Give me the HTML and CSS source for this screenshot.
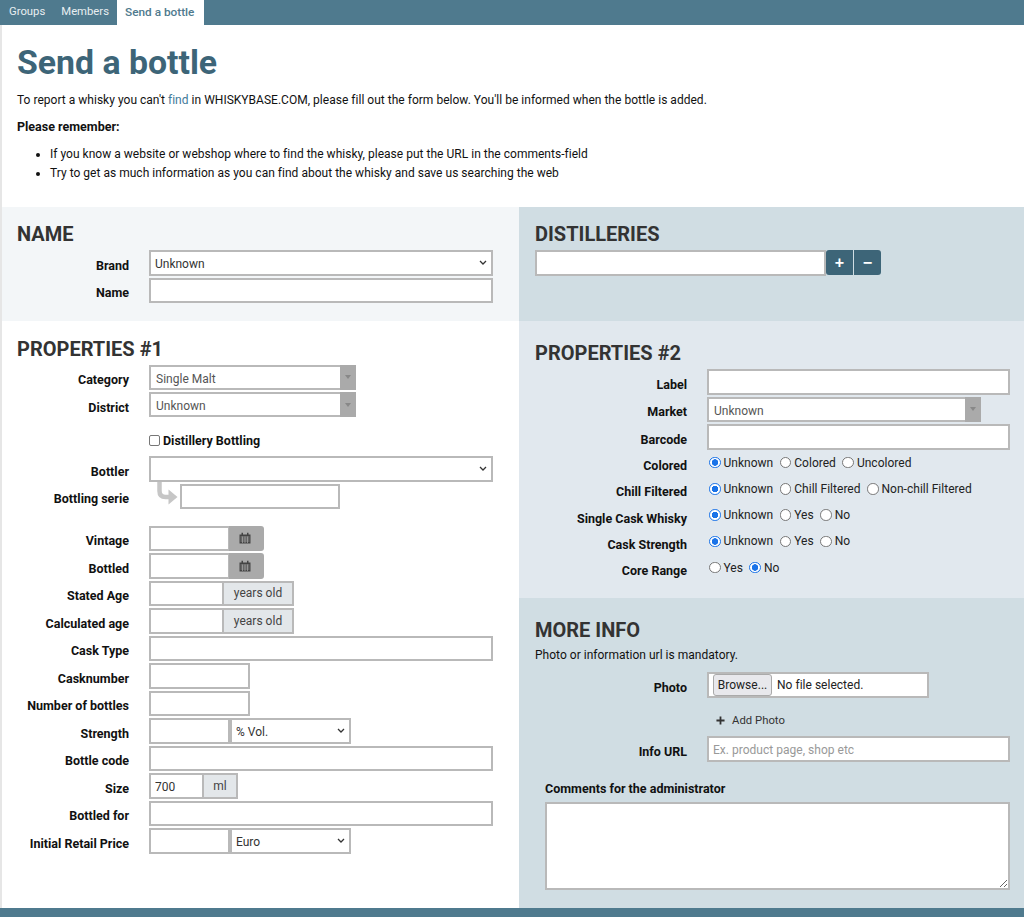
FILE: index.html
```html
<!DOCTYPE html>
<html lang="en">
<head>
    <meta charset="UTF-8">
    <title>Send a bottle</title>
    <link rel="stylesheet" href="styles.css">
</head>
<body>
    <nav class="tabs">
        <a class="tab">Groups</a>
        <a class="tab">Members</a>
        <a class="tab active">Send a bottle</a>
    </nav>
    <div class="page">
        <div class="intro">
            <h1>Send a bottle</h1>
            <p>To report a whisky you can't <a class="link">find</a> in WHISKYBASE.COM, please fill out the form below. You'll be informed when the bottle is added.</p>
            <p class="remember">Please remember:</p>
            <ul>
                <li>If you know a website or webshop where to find the whisky, please put the URL in the comments-field</li>
                <li>Try to get as much information as you can find about the whisky and save us searching the web</li>
            </ul>
        </div>
        <form class="columns">
            <div class="col">
                <section class="block block-name">
                    <h2>NAME</h2>
                    <div class="row"><label>Brand</label><div class="select w-full"><select><option>Unknown</option></select><svg class="chev" viewBox="0 0 8 5"><path d="M1 1l3 3 3-3" fill="none" stroke="#333" stroke-width="1.3"/></svg></div></div>
                    <div class="row"><label>Name</label><input class="w-full" type="text"></div>
                </section>
                <section class="block block-props1">
                    <h2>PROPERTIES #1</h2>
                    <div class="row"><label>Category</label><div class="combo w-207"><span>Single Malt</span><i class="combo-arrow"></i></div></div>
                    <div class="row"><label>District</label><div class="combo w-207"><span>Unknown</span><i class="combo-arrow"></i></div></div>
                    <div class="row-check"><input type="checkbox" id="dist-bottling"><label for="dist-bottling">Distillery Bottling</label></div>
                    <div class="row"><label>Bottler</label><div class="select w-full"><select><option></option></select><svg class="chev" viewBox="0 0 8 5"><path d="M1 1l3 3 3-3" fill="none" stroke="#333" stroke-width="1.3"/></svg></div></div>
                    <div class="row row-serie">
                        <label>Bottling serie</label>
                        <svg class="turn" viewBox="0 0 22 24"><path d="M2.500 0v9q0 6 6 6h4" fill="none" stroke="#c6c6c6" stroke-width="4.500"/><path d="M11.500 7.500l9 7.500-9 7.500z" fill="#c6c6c6"/></svg>
                        <input class="w-160" type="text">
                    </div>
                    <div class="row"><label>Vintage</label><div class="group"><input class="w-81" type="text"><span class="cal-btn"><svg class="cal" viewBox="0 0 12 12"><path d="M0.500 2.500h11v9h-11z M2.500 0.800h1.500v2.500h-1.500z M8 0.800h1.500v2.500h-1.500z" fill="#444"/><path d="M1.500 5h9M1.500 7h9M1.500 9h9M3.500 4.500v6.500M6 4.500v6.500M8.500 4.500v6.500" stroke="#aaa" stroke-width="0.700"/></svg></span></div></div>
                    <div class="row"><label>Bottled</label><div class="group"><input class="w-81" type="text"><span class="cal-btn"><svg class="cal" viewBox="0 0 12 12"><path d="M0.500 2.500h11v9h-11z M2.500 0.800h1.500v2.500h-1.500z M8 0.800h1.500v2.500h-1.500z" fill="#444"/><path d="M1.500 5h9M1.500 7h9M1.500 9h9M3.500 4.500v6.500M6 4.500v6.500M8.500 4.500v6.500" stroke="#aaa" stroke-width="0.700"/></svg></span></div></div>
                    <div class="row"><label>Stated Age</label><div class="group"><input class="w-75" type="text"><span class="addon w-72">years old</span></div></div>
                    <div class="row"><label>Calculated age</label><div class="group"><input class="w-75" type="text"><span class="addon w-72">years old</span></div></div>
                    <div class="row"><label>Cask Type</label><input class="w-full" type="text"></div>
                    <div class="row"><label>Casknumber</label><input class="w-101" type="text"></div>
                    <div class="row"><label>Number of bottles</label><input class="w-101" type="text"></div>
                    <div class="row"><label>Strength</label><div class="group"><input class="w-81" type="text"><div class="select w-121"><select><option>% Vol.</option></select><svg class="chev" viewBox="0 0 8 5"><path d="M1 1l3 3 3-3" fill="none" stroke="#333" stroke-width="1.3"/></svg></div></div></div>
                    <div class="row"><label>Bottle code</label><input class="w-full" type="text"></div>
                    <div class="row"><label>Size</label><div class="group"><input class="w-55" type="text" value="700"><span class="addon w-36">ml</span></div></div>
                    <div class="row"><label>Bottled for</label><input class="w-full" type="text"></div>
                    <div class="row"><label>Initial Retail Price</label><div class="group"><input class="w-81" type="text"><div class="select w-121"><select><option>Euro</option></select><svg class="chev" viewBox="0 0 8 5"><path d="M1 1l3 3 3-3" fill="none" stroke="#333" stroke-width="1.3"/></svg></div></div></div>
                </section>
            </div>
            <div class="col">
                <section class="block block-dist">
                    <h2>DISTILLERIES</h2>
                    <div class="group">
                        <input class="w-291" type="text">
                        <button type="button" class="sq-btn sq-first">+</button>
                        <button type="button" class="sq-btn sq-last">&minus;</button>
                    </div>
                </section>
                <section class="block block-props2">
                    <h2>PROPERTIES #2</h2>
                    <div class="row"><label>Label</label><input class="w-303" type="text"></div>
                    <div class="row"><label>Market</label><div class="combo w-274"><span>Unknown</span><i class="combo-arrow"></i></div></div>
                    <div class="row"><label>Barcode</label><input class="w-303" type="text"></div>
                    <div class="row-radio first-radio"><label>Colored</label><div class="radios">
                        <span><input type="radio" name="colored" checked>Unknown</span><span><input type="radio" name="colored">Colored</span><span><input type="radio" name="colored">Uncolored</span>
                    </div></div>
                    <div class="row-radio"><label>Chill Filtered</label><div class="radios">
                        <span><input type="radio" name="chill" checked>Unknown</span><span><input type="radio" name="chill">Chill Filtered</span><span><input type="radio" name="chill">Non-chill Filtered</span>
                    </div></div>
                    <div class="row-radio"><label>Single Cask Whisky</label><div class="radios">
                        <span><input type="radio" name="single" checked>Unknown</span><span><input type="radio" name="single">Yes</span><span><input type="radio" name="single">No</span>
                    </div></div>
                    <div class="row-radio"><label>Cask Strength</label><div class="radios">
                        <span><input type="radio" name="strength" checked>Unknown</span><span><input type="radio" name="strength">Yes</span><span><input type="radio" name="strength">No</span>
                    </div></div>
                    <div class="row-radio"><label>Core Range</label><div class="radios">
                        <span><input type="radio" name="core">Yes</span><span><input type="radio" name="core" checked>No</span>
                    </div></div>
                </section>
                <section class="block block-more">
                    <h2>MORE INFO</h2>
                    <p class="mandatory">Photo or information url is mandatory.</p>
                    <div class="row"><label>Photo</label><div class="file w-222"><span class="browse">Browse...</span><span>No file selected.</span></div></div>
                    <div class="add-photo"><svg class="plus" viewBox="0 0 10 10"><path d="M5 0.500v9M0.500 5h9" stroke="#333" stroke-width="2"/></svg>Add Photo</div>
                    <div class="row"><label>Info URL</label><input class="w-303" type="text" placeholder="Ex. product page, shop etc"></div>
                    <div class="comments">
                        <label>Comments for the administrator</label>
                        <textarea></textarea>
                    </div>
                </section>
            </div>
        </form>
    </div>
    <div class="footer"></div>
</body>
</html>
```

FILE: styles.css
```css
* {
    box-sizing: border-box;
}
html, body {
    height: 917px;
    overflow: hidden;
}
body {
    margin: 0;
    font-family: Roboto, "Liberation Sans", sans-serif;
    font-size: 12px;
    letter-spacing: 0.02px;
    color: #111;
    background-color: #fff;
}

/* tabs */
.tabs {
    display: flex;
    height: 25px;
    padding-left: 1px;
    background-color: #4f7a8e;
}
.tab {
    padding: 0 8px;
    font-size: 11.300px;
    letter-spacing: 0;
    line-height: 24px;
    color: #e8eef1;
}
.tab.active {
    padding-right: 10px;
    background-color: #fff;
    color: #4f7a8e;
    font-size: 11.800px;
    font-weight: 500;
}

.page {
    border-left: 2px solid #e6e6e6;
    height: 883px;
}
.footer {
    height: 9px;
    background-color: #4f7a8e;
}

/* intro */
.intro {
    height: 182px;
    padding: 19px 15px 0;
}
h1 {
    margin: 0 0 9px;
    font-size: 33.800px;
    line-height: 38px;
    font-weight: 700;
    letter-spacing: 0;
    color: #3d6578;
}
.intro p {
    margin: 0;
    line-height: 18px;
}
.link {
    color: #3f7a99;
}
.intro .remember {
    margin-top: 9px;
    font-size: 12.500px;
    font-weight: 700;
    letter-spacing: 0;
}
.intro ul {
    margin: 9px 0 0;
    padding-left: 33px;
}
.intro li {
    line-height: 18.600px;
}

/* columns */
.columns {
    display: flex;
    height: 701px;
}
.col {
    display: flex;
    flex-direction: column;
}
.col:first-child {
    width: 517px;
}
.col:last-child {
    width: 505px;
}
.block {
    padding-left: 15px;
}
.block-name {
    height: 114px;
    padding-top: 15px;
    background-color: #f3f6f8;
}
.block-props1 {
    flex: 1;
    padding-top: 16px;
}
.block-props1 h2 {
    margin-bottom: 2.500px;
}
.block-dist {
    height: 114px;
    padding: 15px 0 0 16px;
    background-color: #d0dde3;
}
.block-props2 {
    height: 277px;
    padding: 20px 0 0 16px;
    background-color: #e1e8ee;
}
.block-more {
    flex: 1;
    padding: 20px 0 0 16px;
    background-color: #d0dde3;
}
.block-more h2 {
    margin-bottom: 4px;
}
h2 {
    margin: 0 0 3px;
    font-size: 20px;
    line-height: 25px;
    font-weight: 700;
    letter-spacing: 0;
    color: #333;
}

/* rows */
.row, .row-radio {
    display: flex;
    align-items: flex-start;
}
.row {
    margin-bottom: 2px;
}
.row > label, .row-radio > label {
    flex: none;
    height: 25.500px;
    padding-top: 2.500px;
    font-size: 12.500px;
    letter-spacing: 0;
    line-height: 26px;
    text-align: right;
    font-weight: 700;
}
.block-name .row > label, .block-props1 .row > label {
    width: 112px;
    margin-right: 20px;
}
.col:last-child .row > label, .row-radio > label {
    width: 152px;
    margin-right: 20px;
}
.row-check {
    display: flex;
    align-items: center;
    height: 18px;
    margin: 14px 0 6.600px 132px;
    font-size: 12.500px;
    letter-spacing: 0;
    font-weight: 700;
}
.row-check input {
    width: 11px;
    height: 11px;
    margin: 0 3px 0 0;
    appearance: none;
    border: 1px solid #777;
    border-radius: 2px;
    background-color: #fff;
}
.block-props1 .row-serie > label {
    margin-right: 28px;
}
.row-serie .turn {
    flex: none;
    width: 22px;
    height: 24px;
    margin: -2px 1px 0 0;
}
.row-serie {
    margin-bottom: 16.500px;
}

/* inputs */
input[type="text"], textarea, .select, .combo, .file {
    height: 25.500px;
    border: 2px solid #b9b9b9;
    background-color: #fff;
    font-family: Roboto, "Liberation Sans", sans-serif;
    font-size: 12px;
    letter-spacing: 0.02px;
    color: #333;
}
input[type="text"] {
    padding: 2.500px 4px 0;
    border-radius: 0;
    outline: none;
}
input::placeholder {
    color: #999;
    opacity: 1;
}
.select {
    position: relative;
}
.select select {
    display: block;
    width: 100%;
    height: 100%;
    padding: 3px 4px 0;
    appearance: none;
    border: none;
    background: transparent;
    font-family: inherit;
    font-size: 12px;
    color: #333;
    outline: none;
}
.chev {
    position: absolute;
    right: 4px;
    top: 8px;
    width: 8px;
    height: 5px;
}
.combo {
    display: flex;
    align-items: center;
    justify-content: space-between;
    height: 25px;
    padding-left: 5px;
    color: #555;
}
.combo span {
    padding-top: 3px;
}
.combo-arrow {
    display: flex;
    align-items: center;
    justify-content: center;
    width: 16px;
    height: 25px;
    margin-right: -2px;
    background-color: #aaa;
}
.combo-arrow::after {
    content: "";
    border-left: 3px solid transparent;
    border-right: 3px solid transparent;
    border-top: 4px solid #888;
}
.group {
    display: flex;
}
.addon {
    display: flex;
    align-items: center;
    justify-content: center;
    height: 25.500px;
    margin-left: -2px;
    border: 2px solid #b9b9b9;
    background-color: #e3e7ea;
    color: #444;
}
.cal-btn {
    display: flex;
    align-items: center;
    justify-content: center;
    width: 35px;
    height: 25.500px;
    margin-left: -1px;
    padding-right: 4px;
    border-radius: 0 3px 3px 0;
    background-color: #aaa;
}
.cal {
    width: 12px;
    height: 12px;
}
.sq-btn {
    width: 27px;
    height: 25px;
    padding: 0;
    border: none;
    background-color: #3d6578;
    color: #fff;
    font-family: "Liberation Sans", sans-serif;
    font-size: 16px;
    font-weight: 700;
    line-height: 25px;
}
.sq-first {
    border-radius: 3px 0 0 3px;
    margin-right: 1px;
}
.sq-last {
    border-radius: 0 3px 3px 0;
}

/* radios */
.row-radio {
    height: 26.300px;
}
.first-radio {
    margin-top: -1px;
}
.radios {
    display: flex;
    gap: 6.500px;
    padding: 4px 0 0 2px;
    line-height: 16px;
    color: #222;
}
.radios span {
    display: flex;
    align-items: center;
}
.radios input {
    width: 11.500px;
    height: 11.500px;
    margin: 0 3px 0 0;
    appearance: none;
    border: 1px solid #777;
    border-radius: 50%;
    background-color: #fff;
}
.radios input:checked {
    border: 1.500px solid #1a73e8;
    background: radial-gradient(circle, #1a73e8 0 3px, #fff 3.500px);
}

/* more info */
.mandatory {
    margin: 0 0 9px;
    line-height: 16px;
}
.file {
    display: flex;
    align-items: center;
    gap: 5px;
    padding: 1px 0 0 4px;
    color: #222;
}
.browse {
    display: flex;
    align-items: center;
    justify-content: center;
    width: 59px;
    height: 22px;
    border: 1px solid #aaa;
    border-radius: 3px;
    background-color: #e8e8ec;
}
.add-photo {
    display: flex;
    align-items: center;
    gap: 7px;
    height: 16px;
    margin: 15px 0 7.500px 181px;
    font-size: 11.300px;
    color: #333;
}
.plus {
    width: 9px;
    height: 9px;
}
.comments {
    margin: 19.500px 0 0 10px;
}
.comments label {
    display: block;
    margin-bottom: 5px;
    font-size: 12.500px;
    letter-spacing: 0;
    line-height: 16px;
    font-weight: 700;
}
textarea {
    display: block;
    width: 465px;
    height: 88px;
    border-radius: 0;
    outline: none;
}

/* widths */
.w-full { width: 344px; }
.w-207 { width: 207px; }
.w-160 { width: 160px; }
.w-81 { width: 81px; }
.w-75 { width: 75px; }
.w-72 { width: 72px; }
.w-101 { width: 101px; }
.w-121 { width: 121px; }
.w-55 { width: 55px; }
.w-36 { width: 36px; }
.w-291 { width: 291px; }
.w-303 { width: 303px; }
.w-274 { width: 274px; }
.w-222 { width: 222px; }
```
